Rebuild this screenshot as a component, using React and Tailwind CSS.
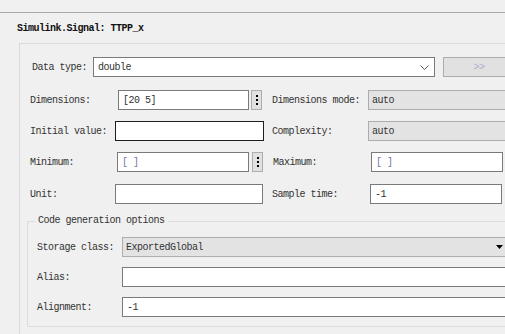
const FONT = { fontFamily: '"Liberation Mono", "DejaVu Sans Mono", monospace' };

function Field({ w, value, dark, muted }) {
  return (
    <div
      className={`h-[20px] shrink-0 bg-white border flex items-center pl-[4px] text-[10px] tracking-[-0.5px] ${
        dark ? 'border-[#1e1e1e]' : 'border-[#7a7a7a]'
      } ${muted ? 'text-[#6f78a8]' : 'text-[#333]'}`}
      style={{ width: w }}
    >
      {value}
    </div>
  );
}

function Combo({ w, value, arrowPad = 6 }) {
  return (
    <div
      className="h-[20px] shrink-0 bg-[#e3e3e3] border border-[#adadad] flex items-center justify-between pl-[3px] text-[10px] tracking-[-0.5px] text-[#333]"
      style={{ width: w, paddingRight: arrowPad }}
    >
      <span>{value}</span>
      <svg width="7" height="4" viewBox="0 0 7 4">
        <path d="M0 0h7L3.5 4z" fill="#000" />
      </svg>
    </div>
  );
}

function Dots({ ml }) {
  return (
    <div
      className="h-[20px] w-[11px] shrink-0 bg-[#e1e1e1] border border-[#adadad] flex flex-col items-center justify-center gap-[2px]"
      style={{ marginLeft: ml }}
    >
      <span className="w-[2px] h-[2px] bg-black" />
      <span className="w-[2px] h-[2px] bg-black" />
      <span className="w-[2px] h-[2px] bg-black" />
    </div>
  );
}

function Label({ w, pl, children }) {
  return (
    <div
      className="shrink-0 text-[10px] tracking-[-0.5px] text-[#333] whitespace-nowrap"
      style={{ width: w, paddingLeft: pl }}
    >
      {children}
    </div>
  );
}

export default function App() {
  return (
    <div className="w-[505px] h-[334px] overflow-hidden bg-[#f0f0f0]" style={FONT}>
      <div className="h-[13px] border-b border-[#a8a8a8]" />
      <div className="h-[30px] flex items-center pl-[17px] text-[10px] tracking-[-0.5px] font-bold text-[#111]">
        Simulink.Signal: TTPP_x
      </div>

      <div className="ml-[19px] w-[620px] h-[300px] border-l border-t border-[#dadada]">
        {/* Data type */}
        <div className="mt-[13px] flex items-center h-[20px]">
          <Label w={73} pl={12}>Data type:</Label>
          <div className="h-[20px] w-[342px] shrink-0 bg-white border border-[#7a7a7a] flex items-center justify-between pl-[4px] pr-[5px] text-[10px] tracking-[-0.5px] text-[#333]">
            <span>double</span>
            <svg width="9" height="5" viewBox="0 0 9 5">
              <path d="M0.5 0.5L4.5 4.5L8.5 0.5" fill="none" stroke="#555" strokeWidth="1" />
            </svg>
          </div>
          <div className="ml-[8px] h-[20px] w-[80px] shrink-0 bg-[#e1e1e1] border border-[#adadad] flex items-center justify-center text-[10px] tracking-[-0.5px] text-[#a8aec8]">
            <span className="mr-[8px]">&gt;&gt;</span>
          </div>
        </div>

        {/* Dimensions */}
        <div className="mt-[13px] flex items-center h-[20px]">
          <Label w={98} pl={10}>Dimensions:</Label>
          <Field w={131} value="[20 5]" />
          <Dots ml={2} />
          <Label w={106} pl={10}>Dimensions mode:</Label>
          <Combo w={150} value="auto" arrowPad={4} />
        </div>

        {/* Initial value */}
        <div className="mt-[11px] flex items-center h-[20px]">
          <Label w={95} pl={10}>Initial value:</Label>
          <Field w={149} value="" dark />
          <Label w={104} pl={8}>Complexity:</Label>
          <Combo w={150} value="auto" arrowPad={4} />
        </div>

        {/* Minimum */}
        <div className="mt-[11px] flex items-center h-[20px]">
          <Label w={97} pl={10}>Minimum:</Label>
          <Field w={132} value="[ ]" muted />
          <Dots ml={3} />
          <Label w={108} pl={10}>Maximum:</Label>
          <Field w={132} value="[ ]" muted />
        </div>

        {/* Unit */}
        <div className="mt-[12px] flex items-center h-[20px]">
          <Label w={95} pl={10}>Unit:</Label>
          <Field w={148} value="" />
          <Label w={107} pl={9}>Sample time:</Label>
          <Field w={132} value="-1" />
        </div>

        {/* Code generation options */}
        <fieldset className="mt-[10px] ml-[7px] w-[560px] border border-[#dcdcdc] pb-[9px]">
          <legend className="ml-[7px] px-[3px] h-[14px] leading-[14px] text-[10px] tracking-[-0.5px] text-[#333]">
            Code generation options
          </legend>
          <div className="mt-[9px] flex items-center h-[20px]">
            <Label w={94} pl={9}>Storage class:</Label>
            <Combo w={388} value="ExportedGlobal" arrowPad={6} />
          </div>
          <div className="mt-[10px] flex items-center h-[20px]">
            <Label w={94} pl={9}>Alias:</Label>
            <Field w={420} value="" />
          </div>
          <div className="mt-[10px] flex items-center h-[20px]">
            <Label w={94} pl={9}>Alignment:</Label>
            <Field w={420} value="-1" />
          </div>
        </fieldset>
      </div>
    </div>
  );
}
